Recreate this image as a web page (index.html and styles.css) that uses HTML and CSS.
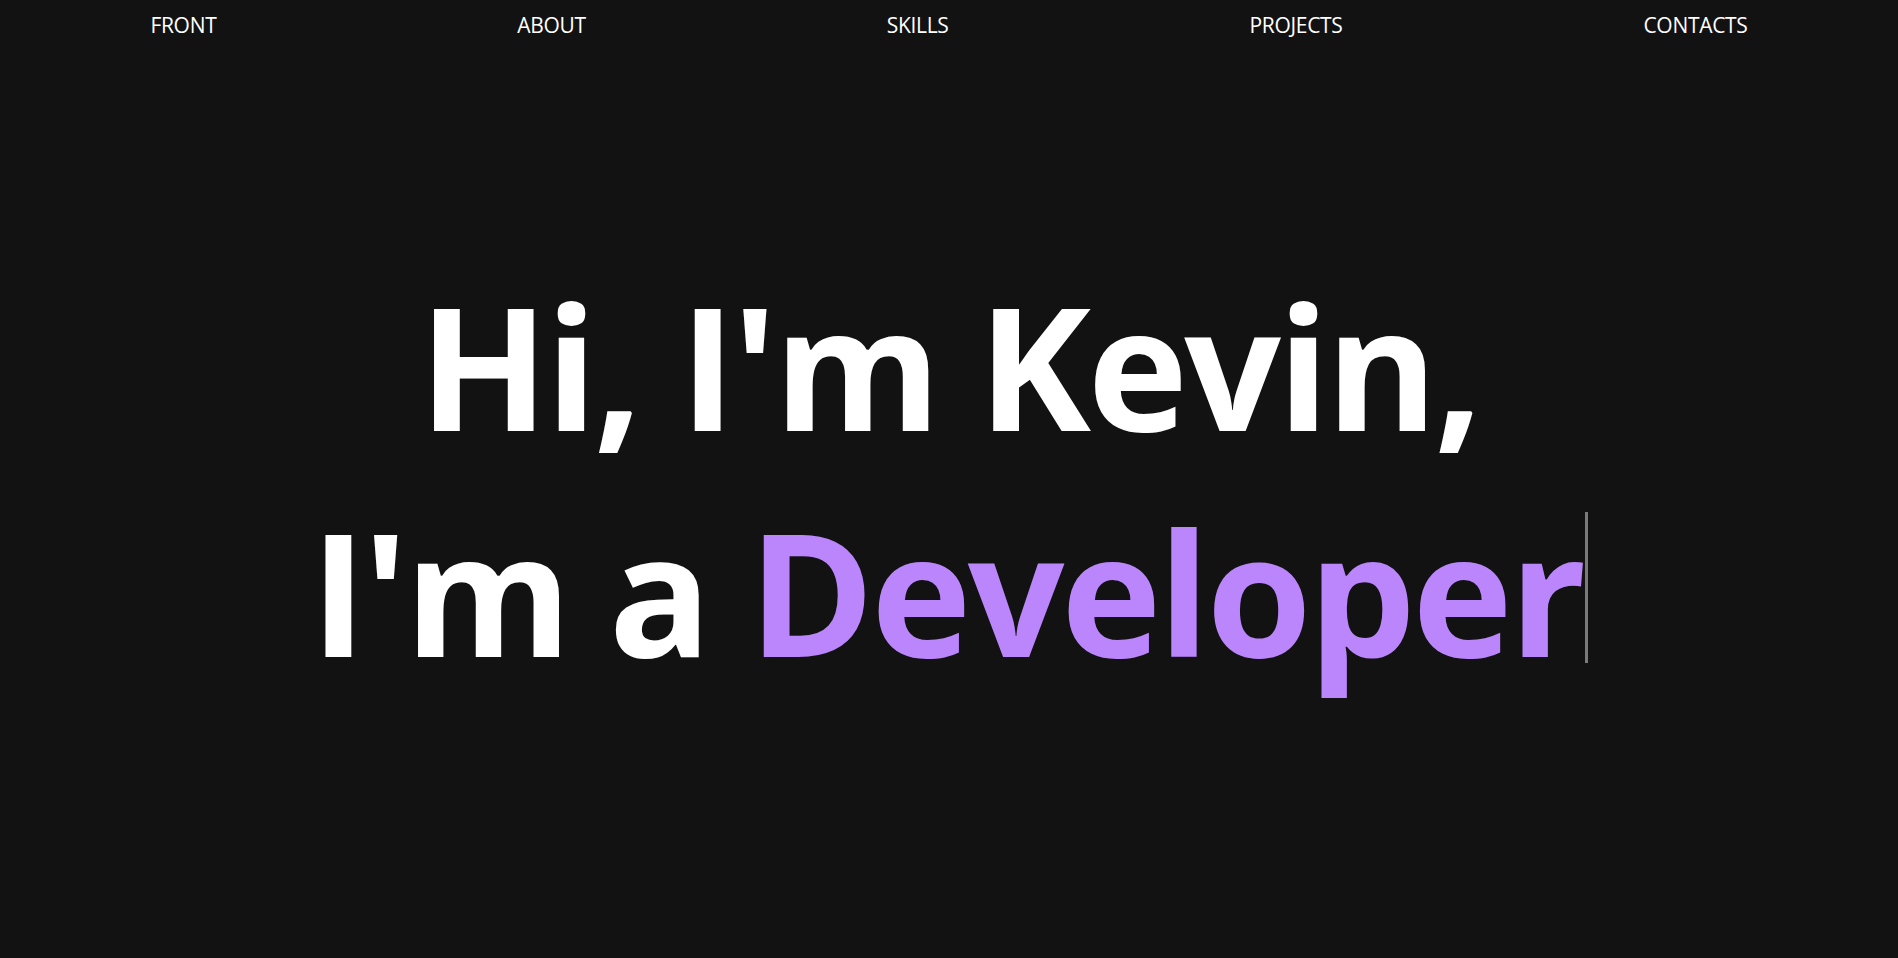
FILE: index.html
```html
<!DOCTYPE html>
<html lang="en">
<head>
<meta charset="utf-8">
<title>Kevin</title>
<link rel="stylesheet" href="styles.css">
</head>
<body>
<header class="nav">
  <a class="nav-link" href="#front">FRONT</a>
  <a class="nav-link" href="#about">ABOUT</a>
  <a class="nav-link" href="#skills">SKILLS</a>
  <a class="nav-link" href="#projects">PROJECTS</a>
  <a class="nav-link" href="#contacts">CONTACTS</a>
</header>
<main class="hero" id="front">
  <h1 class="hero-title">
    <span class="line">Hi, I'm Kevin,</span>
    <span class="line">I'm a <span class="accent">Developer</span><span class="caret"></span></span>
  </h1>
</main>
</body>
</html>
```

FILE: styles.css
```css
html, body {
  margin: 0;
  padding: 0;
  background: #121212;
  color: #ffffff;
  font-family: "Open Sans", "Noto Sans", sans-serif;
}

.nav {
  display: flex;
  justify-content: space-around;
  align-items: center;
  height: 50px;
}

.nav-link {
  color: #ffffff;
  text-decoration: none;
  font-size: 21px;
  letter-spacing: -0.3px;
}

.hero {
  display: flex;
  justify-content: center;
  padding-top: 202px;
}

.hero-title {
  margin: 0;
  font-size: 170px;
  font-weight: 700;
  line-height: 226px;
  letter-spacing: -3.5px;
  text-align: center;
}

.line {
  display: block;
}

.accent {
  color: #bb86fc;
}

.caret {
  display: inline-block;
  width: 3px;
  height: 151px;
  margin-left: 2px;
  background: #7a7a7a;
  vertical-align: -6px;
}
```
